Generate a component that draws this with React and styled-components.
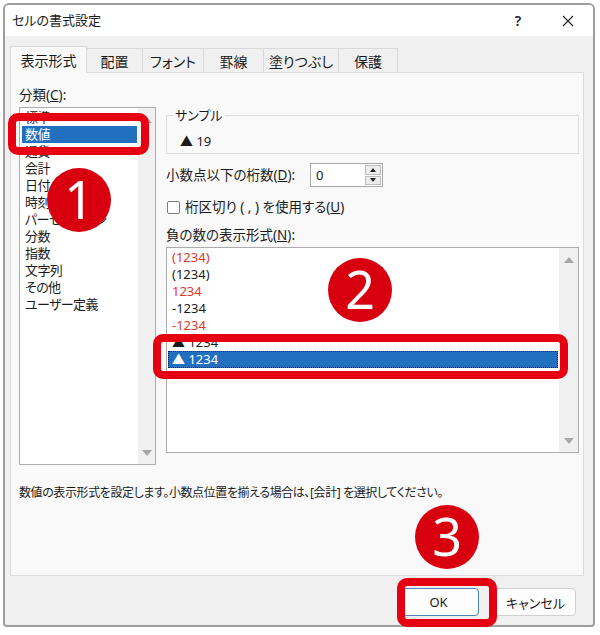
import styled, { createGlobalStyle } from "styled-components";

const GlobalStyle = createGlobalStyle`
  html, body {
    margin: 0;
    padding: 0;
    background: #fff;
  }
  body {
    font-family: "Noto Sans", "Noto Sans CJK JP", sans-serif;
    font-size: 13px;
    color: #1b1b1b;
    font-feature-settings: "palt";
  }
  * {
    box-sizing: border-box;
  }
`;

const categories = [
  "標準",
  "数値",
  "通貨",
  "会計",
  "日付",
  "時刻",
  "パーセンテージ",
  "分数",
  "指数",
  "文字列",
  "その他",
  "ユーザー定義",
];

const negatives = [
  { text: "(1234)", red: true },
  { text: "(1234)" },
  { text: "1234", red: true },
  { text: "-1234" },
  { text: "-1234", red: true },
  { text: "▲ 1234" },
  { text: "▲ 1234", selected: true },
];

const tabs = [
  { label: "表示形式", width: 77 },
  { label: "配置", width: 57 },
  { label: "フォント", width: 62 },
  { label: "罫線", width: 61 },
  { label: "塗りつぶし", width: 76 },
  { label: "保護", width: 60 },
];

const App = () => {
  return (
    <Page>
      <GlobalStyle />
      <Window>
        <TitleBar>
          <Title>セルの書式設定</Title>
          <TitleButtons>
            <TitleButton>?</TitleButton>
            <TitleButton>
              <svg width="12" height="12" viewBox="0 0 12 12">
                <path d="M1 1 L11 11 M11 1 L1 11" stroke="#222" strokeWidth="1.1" fill="none" />
              </svg>
            </TitleButton>
          </TitleButtons>
        </TitleBar>
        <Body>
          <TabStrip>
            {tabs.map((t, i) => (
              <Tab key={t.label} $active={i === 0} $width={t.width}>
                {t.label}
              </Tab>
            ))}
          </TabStrip>
          <Panel>
            <PanelGrid>
              <FieldLabel>
                分類(<u>C</u>):
              </FieldLabel>
              <ListBox $height={358}>
                <ListItems $pad={1}>
                  {categories.map((c) => (
                    <ListItem key={c} $selected={c === "数値"} $indent={2} $tight>
                      {c}
                    </ListItem>
                  ))}
                </ListItems>
                <ScrollBar>
                  <ArrowUp />
                  <ArrowDown />
                </ScrollBar>
              </ListBox>
              <RightCol>
                <GroupBox>
                  <Legend>サンプル</Legend>
                  <SampleText>▲ 19</SampleText>
                </GroupBox>
                <SpinRow>
                  <SpinLabel>
                    小数点以下の桁数(<u>D</u>):
                  </SpinLabel>
                  <SpinBox>
                    <SpinValue>0</SpinValue>
                    <SpinButtons>
                      <SpinHalf>
                        <SmallUp />
                      </SpinHalf>
                      <SpinHalf>
                        <SmallDown />
                      </SpinHalf>
                    </SpinButtons>
                  </SpinBox>
                </SpinRow>
                <CheckRow>
                  <CheckBox />
                  桁区切り ( , ) を使用する(<u>U</u>)
                </CheckRow>
                <NegLabel>
                  負の数の表示形式(<u>N</u>):
                </NegLabel>
                <ListBox $height={206}>
                  <ListItems $pad={1}>
                    {negatives.map((n, i) => (
                      <ListItem
                        key={i}
                        $red={n.red}
                        $selected={n.selected}
                        $focus={n.selected}
                        $indent={1}
                      >
                        {n.text}
                      </ListItem>
                    ))}
                  </ListItems>
                  <ScrollBar $wide>
                    <ArrowUp />
                    <ArrowDown />
                  </ScrollBar>
                </ListBox>
              </RightCol>
            </PanelGrid>
            <Description>
              数値の表示形式を設定します。小数点位置を揃える場合は、[会計] を選択してください。
            </Description>
          </Panel>
          <ButtonBar>
            <DialogButton $primary>OK</DialogButton>
            <DialogButton>キャンセル</DialogButton>
          </ButtonBar>
        </Body>
      </Window>

      <RedFrame $x={8} $y={113} $w={141} $h={42} />
      <RedFrame $x={153} $y={334} $w={415} $h={45} />
      <RedFrame $x={397} $y={578} $w={100} $h={49} />
      <Badge $cx={79} $cy={200}>1</Badge>
      <Badge $cx={360} $cy={290}>2</Badge>
      <Badge $cx={447} $cy={537}>3</Badge>
    </Page>
  );
};

export default App;

const Page = styled.div`
  position: relative;
  width: 600px;
  height: 635px;
  padding: 3px 5px 8px 3px;
  background: #fff;
`;

const Window = styled.div`
  width: 592px;
  height: 624px;
  border: 2px solid #9d9d9d;
  border-radius: 6px 6px 4px 4px;
  overflow: hidden;
  display: flex;
  flex-direction: column;
  background: #f0f0f0;
`;

const TitleBar = styled.div`
  height: 31px;
  flex: 0 0 31px;
  background: #fff;
  display: flex;
  align-items: center;
  justify-content: space-between;
  padding-left: 7px;
`;

const Title = styled.div`
  font-size: 13px;
  line-height: 17px;
  color: #1a1a1a;
`;

const TitleButtons = styled.div`
  display: flex;
  gap: 4px;
  margin-right: 2px;
`;

const TitleButton = styled.div`
  width: 46px;
  height: 28px;
  display: flex;
  align-items: center;
  justify-content: center;
  font-size: 14px;
  font-weight: 600;
  color: #222;
`;

const Body = styled.div`
  flex: 1;
  display: flex;
  flex-direction: column;
  padding: 11px 9px 0 5px;
`;

const TabStrip = styled.div`
  display: flex;
  align-items: flex-end;
  height: 26px;
  margin-bottom: -1px;
  position: relative;
  z-index: 1;
`;

const Tab = styled.div`
  width: ${(p) => p.$width}px;
  height: ${(p) => (p.$active ? 27 : 25)}px;
  margin-left: ${(p) => (p.$active ? 0 : -1)}px;
  display: flex;
  align-items: center;
  justify-content: center;
  font-size: 14px;
  color: #1a1a1a;
  background: ${(p) => (p.$active ? "#f9f9f9" : "#f0f0f0")};
  border: 1px solid #d9d9d9;
  border-bottom: ${(p) => (p.$active ? "1px solid #f9f9f9" : "1px solid #dcdcdc")};
`;

const Panel = styled.div`
  height: 504px;
  flex: 0 0 504px;
  background: #f9f9f9;
  border: 1px solid #dcdcdc;
  padding: 14px 4px 0 8px;
  display: flex;
  flex-direction: column;
`;

const PanelGrid = styled.div`
  display: grid;
  grid-template-columns: 137px 1fr;
  grid-template-rows: 20px auto;
  column-gap: 10px;
`;

const FieldLabel = styled.div`
  grid-column: 1 / 3;
  line-height: 17px;
  font-size: 13.5px;
`;

const ListBox = styled.div`
  height: ${(p) => p.$height}px;
  background: #fff;
  border: 1px solid #adadad;
  display: flex;
  overflow: hidden;
`;

const ListItems = styled.div`
  flex: 1;
  padding-top: ${(p) => p.$pad}px;
  display: flex;
  flex-direction: column;
  overflow: hidden;
`;

const ListItem = styled.div`
  height: 17px;
  line-height: 17px;
  margin: 0 1px 0 ${(p) => p.$indent}px;
  padding-left: ${(p) => (p.$indent === 2 ? 3 : 4)}px;
  white-space: nowrap;
  letter-spacing: ${(p) => (p.$tight ? "-0.6px" : "0")};
  color: ${(p) => (p.$selected ? "#fff" : p.$red ? "#e2372b" : "#1b1b1b")};
  background: ${(p) => (p.$selected ? "#2170c0" : "transparent")};
  outline: ${(p) => (p.$focus ? "1px dotted #0d2440" : "none")};
  outline-offset: -1px;
`;

const ScrollBar = styled.div`
  width: ${(p) => (p.$wide ? 19 : 17)}px;
  flex: 0 0 ${(p) => (p.$wide ? 19 : 17)}px;
  background: #f0f0f0;
  display: flex;
  flex-direction: column;
  justify-content: space-between;
  align-items: center;
  padding: 9px 0 8px;
`;

const ArrowUp = styled.span`
  width: 0;
  height: 0;
  border-left: 5px solid transparent;
  border-right: 5px solid transparent;
  border-bottom: 6px solid #a6a6a6;
`;

const ArrowDown = styled.span`
  width: 0;
  height: 0;
  border-left: 5px solid transparent;
  border-right: 5px solid transparent;
  border-top: 6px solid #a6a6a6;
`;

const RightCol = styled.div`
  display: flex;
  flex-direction: column;
`;

const GroupBox = styled.fieldset`
  margin: 0;
  padding: 9px 0 3px 13px;
  border: 1px solid #dcdcdc;
  min-width: 0;
`;

const Legend = styled.legend`
  padding: 0 2px;
  margin-left: -7px;
  line-height: 17px;
  font-size: 13px;
`;

const SampleText = styled.div`
  line-height: 17px;
`;

const SpinRow = styled.div`
  margin-top: 9px;
  display: flex;
  align-items: center;
  height: 24px;
`;

const SpinLabel = styled.div`
  flex: 0 0 144px;
  line-height: 17px;
  font-size: 13.5px;
`;

const SpinBox = styled.div`
  width: 73px;
  height: 24px;
  display: flex;
  background: #fff;
  border: 1px solid #a8a8a8;
`;

const SpinValue = styled.div`
  flex: 1;
  padding-left: 5px;
  line-height: 22px;
`;

const SpinButtons = styled.div`
  width: 18px;
  display: flex;
  flex-direction: column;
  gap: 1px;
  padding: 1px;
`;

const SpinHalf = styled.div`
  flex: 1;
  display: flex;
  align-items: center;
  justify-content: center;
  background: #ececec;
  border: 1px solid #bdbdbd;
`;

const SmallUp = styled.span`
  border-left: 3px solid transparent;
  border-right: 3px solid transparent;
  border-bottom: 4px solid #222;
`;

const SmallDown = styled.span`
  border-left: 3px solid transparent;
  border-right: 3px solid transparent;
  border-top: 4px solid #222;
`;

const CheckRow = styled.div`
  margin-top: 12px;
  height: 17px;
  display: flex;
  align-items: center;
  line-height: 17px;
  font-size: 13.5px;
`;

const CheckBox = styled.span`
  width: 13px;
  height: 13px;
  margin: 0 5px 0 1px;
  background: #fff;
  border: 1px solid #7c7c7c;
  border-radius: 2px;
`;

const NegLabel = styled.div`
  margin-top: 11px;
  margin-bottom: 3px;
  line-height: 17px;
  font-size: 13.5px;
`;

const Description = styled.div`
  margin-top: 19px;
  line-height: 17px;
  font-size: 12px;
  letter-spacing: -0.4px;
`;

const ButtonBar = styled.div`
  flex: 1;
  display: flex;
  justify-content: flex-end;
  align-items: flex-start;
  gap: 16px;
  padding: 12px 8px 0 0;
`;

const DialogButton = styled.div`
  width: 81px;
  height: 28px;
  display: flex;
  align-items: center;
  justify-content: center;
  font-size: 13px;
  background: #fdfdfd;
  border: 1px solid ${(p) => (p.$primary ? "#4f83bf" : "#d0d0d0")};
  border-radius: 4px;
  color: #1a1a1a;
`;

const RedFrame = styled.div`
  position: absolute;
  left: ${(p) => p.$x}px;
  top: ${(p) => p.$y}px;
  width: ${(p) => p.$w}px;
  height: ${(p) => p.$h}px;
  border: 8px solid #e50012;
  border-radius: 10px;
`;

const Badge = styled.div`
  position: absolute;
  left: ${(p) => p.$cx - 32}px;
  top: ${(p) => p.$cy - 32}px;
  width: 64px;
  height: 64px;
  border-radius: 50%;
  background: #d8000f;
  color: #fff;
  display: flex;
  align-items: center;
  justify-content: center;
  font-family: "Noto Sans", sans-serif;
  font-size: 52px;
  line-height: 1;
  padding-bottom: 2px;
`;
